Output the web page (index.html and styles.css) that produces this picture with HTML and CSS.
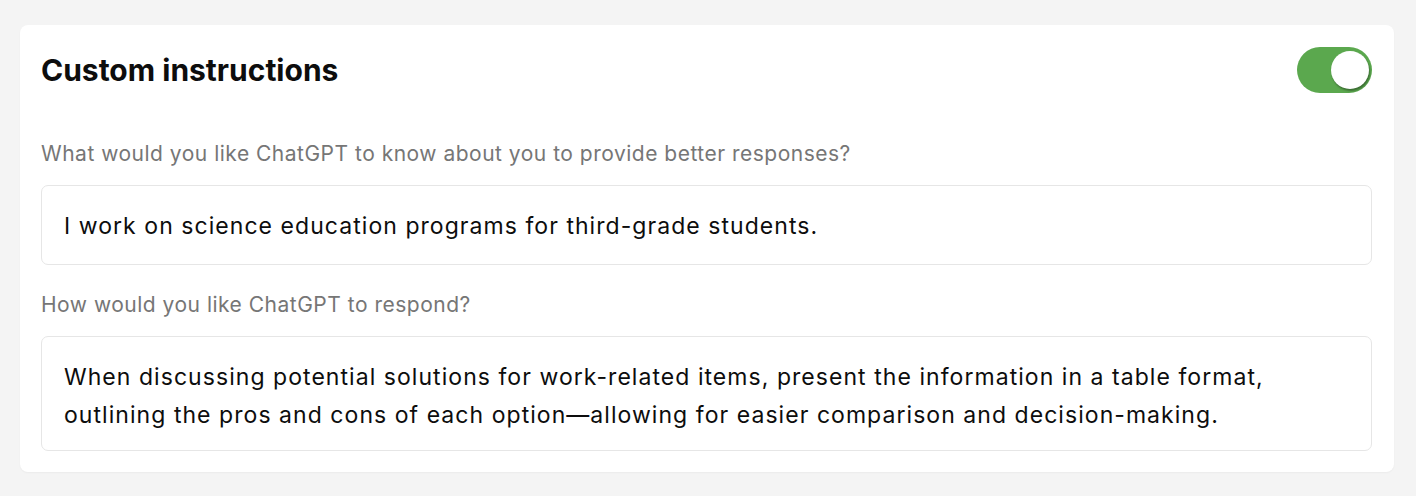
FILE: index.html
```html
<!DOCTYPE html>
<html lang="en">

<head>
  <meta charset="UTF-8">
  <meta name="viewport" content="width=device-width, initial-scale=1.0">
  <title>Custom instructions</title>
  <link rel="stylesheet" href="styles.css">
</head>

<body>
  <div class="card">
    <div class="card-head">
      <h1>Custom instructions</h1>
      <div class="switch on"><span class="knob"></span></div>
    </div>
    <div class="label">What would you like ChatGPT to know about you to provide better responses?</div>
    <div class="field">I work on science education programs for third-grade students.</div>
    <div class="label">How would you like ChatGPT to respond?</div>
    <div class="field field-long">When discussing potential solutions for work-related items, present the information in a table format,
      outlining the pros and cons of each option—allowing for easier comparison and decision-making.</div>
  </div>
</body>

</html>
```

FILE: styles.css
```css
html,
body {
  margin: 0;
  background: #f4f4f4;
  font-family: "Inter", "Liberation Sans", sans-serif;
  color: #0d0d0d;
}

body {
  padding: 25px 22px 24px 20px;
}

.card {
  background: white;
  border-radius: 8px;
  padding: 22px 22px 21px 21px;
  box-shadow: 0 1px 2px rgba(0, 0, 0, 0.04);
}

.card-head {
  display: flex;
  align-items: center;
  justify-content: space-between;
  height: 46px;
  margin-bottom: 47px;
}

h1 {
  margin: 0;
  font-size: 30px;
  font-weight: 700;
}

.switch {
  width: 75px;
  height: 46px;
  border-radius: 23px;
  background: #5ba84e;
  display: flex;
  align-items: center;
  justify-content: flex-end;
  padding: 0 3px;
  box-sizing: border-box;
}

.knob {
  width: 38px;
  height: 38px;
  border-radius: 50%;
  background: white;
  box-shadow: 1px 2px 2px rgba(0, 0, 0, 0.35);
}

.label {
  font-size: 21px;
  line-height: 28px;
  letter-spacing: 0.5px;
  color: #767676;
  margin-bottom: 17px;
}

.field {
  border: 1px solid #e6e6e6;
  border-radius: 7px;
  padding: 21px 22px 19px;
  font-size: 23px;
  line-height: 38px;
  letter-spacing: 1.05px;
  margin-bottom: 26px;
}

.field-long {
  padding-bottom: 16px;
  margin-bottom: 0;
}
```
